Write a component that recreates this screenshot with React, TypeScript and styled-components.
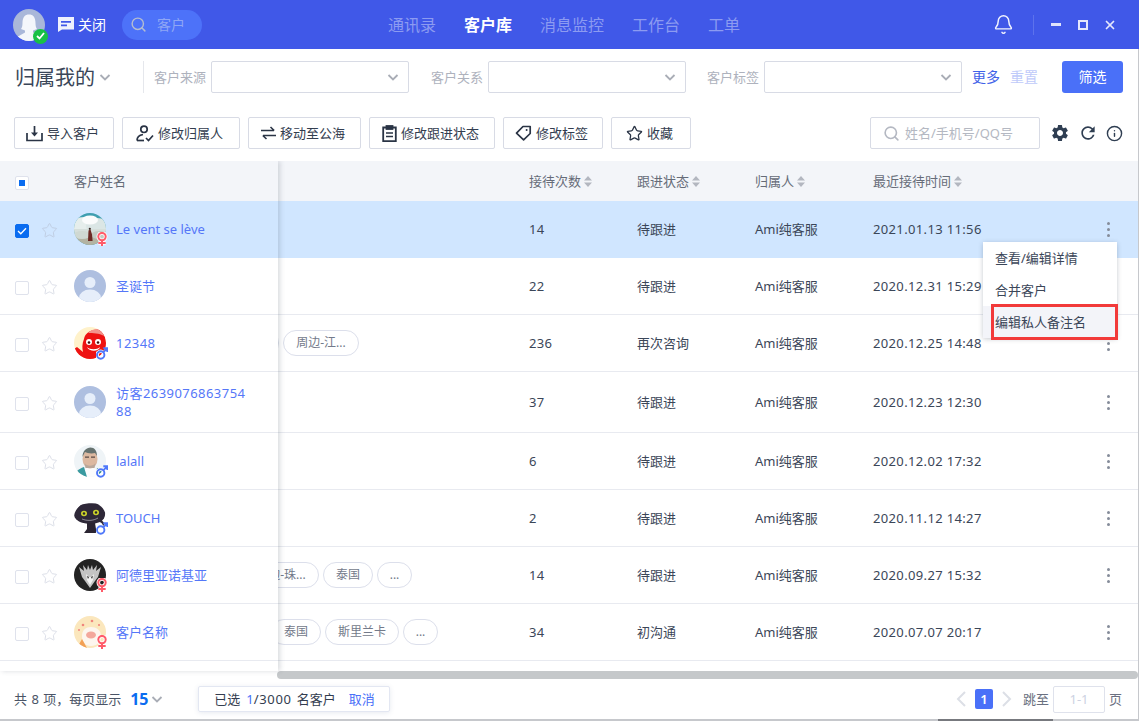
import React from 'react';
import styled, { createGlobalStyle } from 'styled-components';
import { Bell, Info, Search, Star, X } from 'lucide-react';
import { MdRefresh, MdSettings } from 'react-icons/md';

const GlobalStyle = createGlobalStyle`
  html, body {
    margin: 0;
    padding: 0;
    background: #ffffff;
  }
  * {
    box-sizing: border-box;
  }
  body {
    font-family: "Noto Sans", "Noto Sans CJK SC", "Liberation Sans", sans-serif;
    font-size: 13px;
    color: #333d4f;
  }
`;

const Root = styled.div`
  position: relative;
  width: 1139px;
  height: 721px;
  display: flex;
  flex-direction: column;
  overflow: hidden;
  background: #ffffff;
`;

const Body = styled.div`
  flex: 1;
  min-height: 0;
  display: flex;
  flex-direction: column;
  border-right: 1px solid #c6c8cc;
`;

// the CJK face sits a little low in its line box, this lifts a label back
const Label = styled.span`
  padding-bottom: 2px;
  white-space: nowrap;
`;

/* ---------- title bar ---------- */
const Header = styled.header`
  height: 49px;
  flex: none;
  display: flex;
  align-items: center;
  padding-left: 13px;
  background: #4058e8;
  color: #ffffff;
`;

const UserAvatar = styled.div`
  position: relative;
  width: 32px;
  height: 32px;
  flex: none;
  border-radius: 50%;
  overflow: visible;
  svg.face {
    display: block;
    border-radius: 50%;
  }
`;

const OnlineBadge = styled.span`
  position: absolute;
  right: -3px;
  bottom: -3px;
  width: 15px;
  height: 15px;
  border-radius: 50%;
  background: #18c145;
  display: flex;
  align-items: center;
  justify-content: center;
`;

const CloseChat = styled.div`
  display: flex;
  align-items: center;
  gap: 4px;
  margin-left: 13px;
  font-size: 14px;
  width: 64px;
`;

const SearchPill = styled.div`
  width: 80px;
  height: 30px;
  border-radius: 15px;
  background: #4d72f9;
  display: flex;
  align-items: center;
  gap: 10px;
  padding-left: 8px;
  color: #8fa7f5;
  font-size: 14px;
  svg {
    color: #b4bdd0;
  }
`;

const Nav = styled.nav`
  display: flex;
  gap: 28px;
  margin-left: 186px;
`;

const NavItem = styled.span<{ $active?: boolean }>`
  font-size: 16px;
  padding-bottom: 2px;
  font-weight: ${(p) => (p.$active ? 700 : 400)};
  color: ${(p) => (p.$active ? '#ffffff' : '#8c9bf1')};
`;

const WindowControls = styled.div`
  margin-left: auto;
  display: flex;
  align-items: center;
  padding-right: 22px;
`;

const HeaderDivider = styled.span`
  width: 1px;
  height: 20px;
  background: #5d72ec;
  margin: 0 17px 0 19px;
`;

const MinimizeGlyph = styled.span`
  width: 10px;
  height: 3px;
  background: #dfe3fb;
  margin-right: 17px;
`;

const MaximizeGlyph = styled.span`
  width: 10px;
  height: 10px;
  border: 2px solid #e4e7fc;
  margin-right: 15px;
`;

/* ---------- filters ---------- */
const FilterBar = styled.div`
  display: flex;
  align-items: center;
  height: 32px;
  margin-top: 12px;
  padding-left: 15px;
  flex: none;
`;

const ViewTitle = styled.div`
  display: flex;
  align-items: center;
  gap: 4px;
  width: 129px;
  height: 32px;
  border-right: 1px solid #e5e7ec;
  font-size: 20px;
  color: #3a4658;
  svg {
    color: #a9adb6;
  }
`;

const FilterLabel = styled.span<{ $gap: number }>`
  margin-left: ${(p) => p.$gap}px;
  margin-right: 5px;
  padding-bottom: 2px;
  font-size: 13px;
  color: #aeb2bd;
  white-space: nowrap;
`;

const SelectBox = styled.div`
  width: 198px;
  height: 32px;
  border: 1px solid #d8dbe5;
  border-radius: 2px;
  display: flex;
  align-items: center;
  justify-content: flex-end;
  padding-right: 9px;
  color: #a9adb6;
`;

const FilterLink = styled.a<{ $muted?: boolean }>`
  font-size: 14px;
  margin-left: 10px;
  padding-bottom: 2px;
  color: ${(p) => (p.$muted ? '#bfcafa' : '#3f62e8')};
  white-space: nowrap;
`;

const PrimaryButton = styled.button`
  width: 61px;
  height: 32px;
  margin-left: 24px;
  padding: 0 0 2px;
  border: 0;
  border-radius: 3px;
  background: #4a70f8;
  color: #ffffff;
  font: inherit;
  font-size: 14px;
`;

/* ---------- toolbar ---------- */
const Toolbar = styled.div`
  display: flex;
  align-items: center;
  gap: 8px;
  height: 32px;
  margin-top: 24px;
  margin-bottom: 12px;
  padding-left: 14px;
  flex: none;
`;

const ToolButton = styled.button<{ $width: number }>`
  width: ${(p) => p.$width}px;
  height: 32px;
  display: flex;
  align-items: center;
  justify-content: center;
  gap: 4px;
  padding: 0 3px 0 0;
  border: 1px solid #d8dbe5;
  border-radius: 2px;
  background: #ffffff;
  color: #333d4f;
  font: inherit;
  font-size: 13px;
`;

const ToolSearch = styled.div`
  width: 170px;
  height: 32px;
  margin-left: auto;
  display: flex;
  align-items: center;
  gap: 5px;
  padding-left: 12px;
  border: 1px solid #d8dbe5;
  border-radius: 2px;
  color: #b4b8c2;
  font-size: 13px;
`;

const ToolIcons = styled.div`
  display: flex;
  align-items: center;
  gap: 8px;
  margin-left: 2px;
  margin-right: 15px;
  color: #2f3e52;
`;

/* ---------- table ---------- */
const TableArea = styled.div`
  flex: 1;
  min-height: 0;
  display: grid;
  grid-template-columns: 278px 860px;
  overflow: hidden;
`;

const FrozenColumn = styled.div`
  position: relative;
  z-index: 2;
  height: 510px;
  background: #ffffff;
  box-shadow: 2px 0 5px rgba(60, 70, 90, 0.2);
`;

const HeadCell = styled.div`
  height: 40px;
  background: #f3f5f9;
  color: #666c78;
  font-size: 13px;
  display: flex;
  align-items: center;
`;

const FrozenHead = styled(HeadCell)`
  padding-left: 15px;
  gap: 45px;
`;

const ColumnsHead = styled(HeadCell)`
  display: grid;
  grid-template-columns: 251px 108px 118px 118px 1fr;
`;

const ColumnTitle = styled.span`
  display: flex;
  align-items: center;
  gap: 3px;
`;

const FrozenRow = styled.div<{ $height: number; $selected?: boolean }>`
  height: ${(p) => p.$height}px;
  display: flex;
  align-items: center;
  padding-left: 15px;
  background: ${(p) => (p.$selected ? '#d0e6ff' : '#ffffff')};
  border-bottom: 1px solid ${(p) => (p.$selected ? '#d0e6ff' : '#e8eaf0')};
`;

const DataRow = styled.div<{ $height: number; $selected?: boolean }>`
  height: ${(p) => p.$height}px;
  display: grid;
  grid-template-columns: 251px 108px 118px 118px 1fr 60px;
  align-items: center;
  background: ${(p) => (p.$selected ? '#d0e6ff' : '#ffffff')};
  border-bottom: 1px solid ${(p) => (p.$selected ? '#d0e6ff' : '#e8eaf0')};
  font-size: 13px;
  color: #3b4658;
`;

const Checkbox = styled.span<{ $state?: 'checked' | 'partial' }>`
  width: 14px;
  height: 14px;
  flex: none;
  margin-top: 4px;
  border-radius: 2px;
  border: 1px solid ${(p) => (p.$state === 'checked' ? '#0a6cf0' : '#dfe2ec')};
  background: ${(p) => (p.$state === 'checked' ? '#0a6cf0' : '#ffffff')};
  display: flex;
  align-items: center;
  justify-content: center;
  &::after {
    content: '';
    display: ${(p) => (p.$state === 'partial' ? 'block' : 'none')};
    width: 6px;
    height: 6px;
    background: #0a6cf0;
  }
`;

const RowStar = styled.span<{ $selected?: boolean }>`
  width: 17px;
  margin: 2px 16px 0 12px;
  display: flex;
  color: ${(p) => (p.$selected ? '#bfcde3' : '#dcdfe8')};
`;

const AvatarWrap = styled.div`
  position: relative;
  width: 32px;
  height: 32px;
  flex: none;
  svg.face {
    display: block;
    border-radius: 50%;
  }
`;

const GenderMark = styled.span`
  position: absolute;
  right: -2px;
  bottom: -1px;
  width: 12px;
  height: 14px;
  display: flex;
`;

const CustomerName = styled.a<{ $digits?: boolean }>`
  width: 134px;
  margin-left: 10px;
  font-size: 13px;
  line-height: 18px;
  letter-spacing: ${(p) => (p.$digits ? '0.45px' : '0')};
  color: #5577f8;
  word-break: break-all;
`;

const TagList = styled.div<{ $shift: number }>`
  display: flex;
  gap: 4px;
  margin-left: ${(p) => p.$shift + 5}px;
`;

const Tag = styled.span<{ $width: number }>`
  width: ${(p) => p.$width}px;
  height: 26px;
  flex: none;
  display: flex;
  align-items: center;
  justify-content: center;
  padding-bottom: 2px;
  border: 1px solid #dcdfeb;
  border-radius: 13px;
  background: #ffffff;
  color: #737a8a;
  font-size: 12px;
  white-space: nowrap;
`;

const VisitCount = styled.span`
  letter-spacing: 0.3px;
`;

const DateCell = styled.span`
  letter-spacing: 0.35px;
  white-space: nowrap;
`;

const RowMenu = styled.div`
  justify-self: center;
  display: flex;
  flex-direction: column;
  gap: 3px;
  i {
    width: 3px;
    height: 3px;
    border-radius: 50%;
    background: #858c9a;
    display: block;
  }
`;

const ScrollTrack = styled.div`
  height: 8px;
  margin-top: auto;
  margin-left: -1px;
  border-radius: 4px;
  background: #c5c8ca;
`;

const ScrollStack = styled.div`
  min-width: 0;
  height: 518px;
  display: flex;
  flex-direction: column;
`;

const ContextMenu = styled.ul`
  position: absolute;
  left: 983px;
  top: 242px;
  z-index: 5;
  width: 134px;
  margin: 0;
  padding: 0;
  list-style: none;
  background: #ffffff;
  border-radius: 2px;
  box-shadow: 0 1px 5px rgba(50, 60, 80, 0.28);
`;

const ContextItem = styled.li<{ $outlined?: boolean }>`
  position: relative;
  height: 32px;
  padding: 0 0 2px 12px;
  display: flex;
  align-items: center;
  color: #3b4658;
  font-size: 13px;
  white-space: nowrap;
  background: ${(p) => (p.$outlined ? '#f3f4f9' : '#ffffff')};
  &::after {
    content: '';
    display: ${(p) => (p.$outlined ? 'block' : 'none')};
    position: absolute;
    left: 8px;
    right: -1px;
    top: -2px;
    bottom: -2px;
    border: 3px solid #f23a3a;
  }
`;

/* ---------- footer ---------- */
const Footer = styled.footer`
  height: 40px;
  flex: none;
  display: flex;
  align-items: center;
  padding-left: 14px;
  background: #ffffff;
  position: relative;
  z-index: 3;
`;

const TotalText = styled(Label)`
  font-size: 13px;
  word-spacing: 1px;
  color: #4a5466;
`;

const PageSize = styled.span`
  display: flex;
  align-items: center;
  gap: 2px;
  margin-left: 9px;
  width: 68px;
  color: #0a6cf0;
  font-size: 16px;
  font-weight: 700;
  svg {
    color: #a9adb6;
  }
`;

const SelectionBar = styled.div`
  width: 192px;
  height: 26px;
  display: flex;
  align-items: center;
  padding-left: 15px;
  border: 1px solid #e3e7f2;
  border-radius: 2px;
  box-shadow: 0 1px 5px rgba(70, 90, 140, 0.13);
  font-size: 13px;
  color: #333d4f;
  white-space: nowrap;
`;

const PickedCount = styled.span`
  margin-left: 6px;
  color: #4a70f8;
`;

const LimitCount = styled.span`
  margin-right: 5px;
  letter-spacing: 0.7px;
`;

const CancelLink = styled(Label)`
  margin-left: 13px;
  color: #4a70f8;
`;

const Pagination = styled.div`
  margin-left: auto;
  display: flex;
  align-items: center;
  padding-right: 16px;
  color: #6a7080;
  font-size: 13px;
  svg {
    color: #dcdfe6;
  }
`;

const PageNumber = styled.span`
  width: 18px;
  height: 20px;
  margin: 0 9px;
  border-radius: 2px;
  background: #4a70f8;
  color: #ffffff;
  font-weight: 600;
  display: flex;
  align-items: center;
  justify-content: center;
`;

const JumpLabel = styled(Label)`
  margin-left: 11px;
`;

const JumpInput = styled.span`
  width: 52px;
  height: 27px;
  margin: 0 4px;
  border: 1px solid #dfe2ec;
  border-radius: 2px;
  color: #ccd2e2;
  display: flex;
  align-items: center;
  justify-content: center;
`;

const WindowEdge = styled.div`
  height: 2px;
  flex: none;
  background: linear-gradient(
    to right,
    #c6c8cc 938px,
    #77797e 938px,
    #77797e 1053px,
    #c6c8cc 1053px
  );
`;

/* ---------- drawings ---------- */
const Chevron = ({ size = 12 }: { size?: number }) => (
  <svg width={size} height={size} viewBox="0 0 12 12" fill="none">
    <path d="M1.5 4l4.5 4.5L10.5 4" stroke="currentColor" strokeWidth="1.8" />
  </svg>
);

const SortMark = () => (
  <svg width="8" height="11" viewBox="0 0 8 11" fill="#b3b7c0">
    <path d="M4 0l4 4.5H0zM4 11L0 6.5h8z" />
  </svg>
);

const ImportIcon = () => (
  <svg width="17" height="17" viewBox="0 0 17 17" fill="none" stroke="#2a3445" strokeWidth="1.7">
    <path d="M1 8v7.500h15V8" />
    <path d="M8.500 1v9" />
    <path d="M5 7.500h7l-3.500 4z" fill="#2a3445" stroke="none" />
  </svg>
);

const OwnerIcon = () => (
  <svg width="18" height="17" viewBox="0 0 18 17" fill="none" stroke="#2a3445" strokeWidth="1.7">
    <circle cx="8" cy="4.300" r="3.200" />
    <path d="M1 15.500c0-3.500 3-5.500 6-6" />
    <path d="M1 15.500h7" />
    <path d="M10 13l2.500 2.500L17 10.500" />
  </svg>
);

const SwapIcon = () => (
  <svg width="15" height="14" viewBox="0 0 15 14" fill="none" stroke="#2a3445" strokeWidth="1.600">
    <path d="M0 4.500h13M9.500 1l3.700 3.500" />
    <path d="M15 9.500H2M5.500 13L1.800 9.500" />
  </svg>
);

const ClipboardIcon = () => (
  <svg width="15" height="17" viewBox="0 0 15 17" fill="none" stroke="#2a3445" strokeWidth="1.800">
    <path d="M4 2.500H1.200v13.600h12.600V2.500H11" />
    <rect x="4.500" y="1" width="6" height="3" fill="#2a3445" />
    <path d="M4 8h7M4 11.500h7" strokeWidth="1.500" />
  </svg>
);

const TagIcon = () => (
  <svg width="17" height="16" viewBox="0 0 17 16" fill="none" stroke="#2a3445" strokeWidth="1.700">
    <path d="M1.500 8.200L8 1.500h7.200v7L8.600 14.800z" strokeLinejoin="round" />
    <circle cx="11.600" cy="5" r="1" fill="#2a3445" stroke="none" />
  </svg>
);

const CloseChatIcon = () => (
  <svg width="16" height="15" viewBox="0 0 16 15">
    <path d="M0 0h16v12.500H4L0 15z" fill="#eef1fd" />
    <path d="M3 4h10v1.800H3zM3 7.500h6v1.800H3z" fill="#4058e8" />
  </svg>
);

const PersonFace = () => (
  <svg className="face" width="32" height="32" viewBox="0 0 32 32">
    <rect width="32" height="32" fill="#aebfe0" />
    <circle cx="16" cy="12.500" r="5.500" fill="#e6eefa" />
    <ellipse cx="16" cy="28" rx="11" ry="8.500" fill="#e6eefa" />
  </svg>
);

const WomanFace = () => (
  <svg className="face" width="32" height="32" viewBox="0 0 32 32">
    <rect width="32" height="32" fill="#a9b7d9" />
    <path d="M9.500 14c0-6 2.600-8.500 6.500-8.500s6.500 2.500 6.500 8.500c0 3 .6 5 1.500 6l-4 1.500v2l7 4V32H5v-4.500l7-4v-2L8 20c.9-1 1.500-3 1.500-6z" fill="#f4f6fb" />
  </svg>
);

const CloudFace = () => (
  <svg className="face" width="32" height="32" viewBox="0 0 32 32">
    <rect width="32" height="32" fill="#3f9fb0" />
    <ellipse cx="10" cy="12" rx="12" ry="8" fill="#e6eeec" />
    <ellipse cx="23" cy="13" rx="11" ry="8" fill="#dbe6e5" />
    <ellipse cx="16" cy="7" rx="8" ry="4.500" fill="#fbfcfc" />
    <rect y="16" width="32" height="8" fill="#d6dfdb" />
    <rect y="23" width="32" height="9" fill="#b3b3a2" />
    <ellipse cx="8" cy="22" rx="9" ry="4" fill="#cfd8d2" />
    <ellipse cx="25" cy="22" rx="8" ry="4" fill="#c3cbc2" />
    <path d="M14.500 17.500l2-1 1.500 5 .6 6.500h-4.600z" fill="#6d2a24" />
    <circle cx="15.800" cy="15.800" r="1.100" fill="#3a2a26" />
  </svg>
);

const MascotFace = () => (
  <svg className="face" width="32" height="32" viewBox="0 0 32 32">
    <rect width="32" height="32" fill="#fff2cb" />
    <path d="M10 12c1-7 10-11 17-9 3 3 5 8 5 13v16H9l-3-2-6-8 3-2 6 5c-1-4-1-8 1-13z" fill="#ee1212" />
    <path d="M14 6c3-4 10-5 14-2l2 5c-5-3-11-3-16-3z" fill="#f2938d" />
    <circle cx="15" cy="15" r="3" fill="#ffffff" />
    <circle cx="24" cy="15" r="3" fill="#ffffff" />
    <circle cx="15" cy="15.500" r="1.300" fill="#3a1010" />
    <circle cx="24" cy="15.500" r="1.300" fill="#3a1010" />
    <path d="M13 20c3 3 10 3 13 0-1 5-11 5-13 0z" fill="#ffffff" />
  </svg>
);

const ManFace = () => (
  <svg className="face" width="32" height="32" viewBox="0 0 32 32">
    <rect width="32" height="32" fill="#eff4f7" />
    <path d="M4 32c1-6 4-8 8-9h8c4 1 7 3 8 9z" fill="#fbfcfd" />
    <path d="M3 26c2-2 4-3 7-4l3 10H7z" fill="#3a9aa0" />
    <path d="M3 26l5 6H4z" fill="#eba04f" />
    <path d="M23 23c2 .5 4 2 5 4l-3 5h-3z" fill="#3a8f9a" />
    <ellipse cx="16" cy="14" rx="7.500" ry="9.500" fill="#dcb8a0" />
    <path d="M8.500 12c0-6 4-9.500 8-9.500s6.500 3 6.500 8.500l-2-3c-4 1-8 0-10-1z" fill="#66726f" />
    <path d="M10.500 18c2 3.500 9 3.500 11 0l-1 5h-9z" fill="#b9a79a" />
    <path d="M11 11.500h4v1.300h-4zM17 11.500h4v1.300h-4z" fill="#5a4a44" />
  </svg>
);

const CatFace = () => (
  <svg className="face" width="32" height="32" viewBox="0 0 32 32">
    <rect width="32" height="32" fill="#ffffff" />
    <path d="M0 10L6 3c6-2 14-2 21-1l4 6c1 6-1 10-5 12-7 3-15 2-20 0C2 18-1 15 0 10z" fill="#2e2838" />
    <ellipse cx="10" cy="11.500" rx="3" ry="2.800" fill="#c9d02a" />
    <ellipse cx="22" cy="10.500" rx="3" ry="2.800" fill="#c9d02a" />
    <circle cx="10" cy="11.500" r="1.200" fill="#26232e" />
    <circle cx="22" cy="10.500" r="1.200" fill="#26232e" />
    <path d="M8 17c5 2 11 2 16-1" stroke="#8d8a94" strokeWidth="1" fill="none" />
    <path d="M13 21h8l1 6 3 4H10l3-4z" fill="#2a2431" />
    <path d="M26 19c3 1 4 3 4 6" stroke="#2e2838" strokeWidth="2" fill="none" />
  </svg>
);

const EmblemFace = () => (
  <svg className="face" width="32" height="32" viewBox="0 0 32 32">
    <rect width="32" height="32" fill="#232323" />
    <path d="M16 29l-5-7-3-4-3-10 5 4-1-6 4 5 1-5 2 5 2-5 1 5 4-5-1 6 5-4-3 10-3 4z" fill="#c4c4c4" />
    <path d="M12 15l3 3h2l3-3-1 6-3 5-3-5z" fill="#f2f2f2" />
    <path d="M13 17l2 1-1 2zM19 17l-2 1 1 2z" fill="#232323" />
  </svg>
);

const PigFace = () => (
  <svg className="face" width="32" height="32" viewBox="0 0 32 32">
    <rect width="32" height="32" fill="#fbe7bd" />
    <path d="M8 20c0-6 4-9 9-9s10 3 10 9-4 10-10 10S8 26 8 20z" fill="#fdf6ee" />
    <ellipse cx="17" cy="19" rx="5" ry="3.500" fill="#f3a89c" />
    <path d="M3 32l5-9 5 9z" fill="#f2a055" />
    <circle cx="9" cy="9" r="1.300" fill="#f0857c" />
    <circle cx="18" cy="5" r="1.300" fill="#f0857c" />
    <circle cx="25" cy="9" r="1.100" fill="#f0857c" />
    <circle cx="5" cy="14" r="1" fill="#f0857c" />
  </svg>
);

const FemaleMark = () => (
  <svg width="12" height="14" viewBox="0 0 12 14" fill="none" stroke="#ff5c6a" strokeWidth="2">
    <circle cx="6" cy="4.600" r="3.700" stroke="#ffffff" strokeWidth="3.600" />
    <path d="M6 8v5.500M2.300 11h7.400" stroke="#ffffff" strokeWidth="3.600" />
    <circle cx="6" cy="4.600" r="3.700" />
    <path d="M6 8v6M2.300 11h7.400" />
  </svg>
);

const MaleMark = () => (
  <svg width="12" height="14" viewBox="0 0 12 14" fill="none" stroke="#4f78fa" strokeWidth="1.900">
    <circle cx="4.700" cy="9" r="3.700" stroke="#ffffff" strokeWidth="3.500" />
    <circle cx="4.700" cy="9" r="3.700" />
    <path d="M7.500 6.200L11 2.700M7.300 2.200H11.300V6" />
  </svg>
);

const RowCheck = () => (
  <svg width="10" height="8" viewBox="0 0 10 8" fill="none" stroke="#ffffff" strokeWidth="1.300">
    <path d="M1 4l2.800 2.800L9 1.300" />
  </svg>
);

/* ---------- data ---------- */
interface Customer {
  name: string;
  face: React.ReactNode;
  gender?: 'female' | 'male';
  visits: number;
  status: string;
  time: string;
  height: number;
  tags?: { label: string; width: number }[];
  tagShift?: number;
  selected?: boolean;
}

const customers: Customer[] = [
  { name: 'Le vent se lève', face: <CloudFace />, gender: 'female', visits: 14, status: '待跟进', time: '2021.01.13 11:56', height: 57, selected: true },
  { name: '圣诞节', face: <PersonFace />, visits: 22, status: '待跟进', time: '2020.12.31 15:29', height: 57 },
  {
    name: '12348', face: <MascotFace />, gender: 'male', visits: 236, status: '再次咨询', time: '2020.12.25 14:48', height: 57,
    tags: [{ label: '周边-珠...', width: 76 }, { label: '周边-江...', width: 76 }], tagShift: -80,
  },
  { name: '访客263907686375488', face: <PersonFace />, visits: 37, status: '待跟进', time: '2020.12.23 12:30', height: 61 },
  { name: 'lalall', face: <ManFace />, gender: 'male', visits: 6, status: '待跟进', time: '2020.12.02 17:32', height: 57 },
  { name: 'TOUCH', face: <CatFace />, gender: 'male', visits: 2, status: '待跟进', time: '2020.11.12 14:27', height: 57 },
  {
    name: '阿德里亚诺基亚', face: <EmblemFace />, gender: 'female', visits: 14, status: '待跟进', time: '2020.09.27 15:32', height: 57,
    tags: [{ label: '周边-珠...', width: 76 }, { label: '泰国', width: 50 }, { label: '...', width: 35 }], tagShift: -40,
  },
  {
    name: '客户名称', face: <PigFace />, gender: 'female', visits: 34, status: '初沟通', time: '2020.07.07 20:17', height: 57,
    tags: [{ label: '泰国', width: 50 }, { label: '斯里兰卡', width: 74 }, { label: '...', width: 35 }], tagShift: -12,
  },
];

const toolActions = [
  { label: '导入客户', width: 100, icon: <ImportIcon /> },
  { label: '修改归属人', width: 118, icon: <OwnerIcon /> },
  { label: '移动至公海', width: 113, icon: <SwapIcon /> },
  { label: '修改跟进状态', width: 126, icon: <ClipboardIcon /> },
  { label: '修改标签', width: 100, icon: <TagIcon /> },
  { label: '收藏', width: 80, icon: <Star size={17} strokeWidth={1.8} color="#2a3445" /> },
];

const navItems = ['通讯录', '客户库', '消息监控', '工作台', '工单'];
const filters = [
  { label: '客户来源', gap: 10 },
  { label: '客户关系', gap: 22 },
  { label: '客户标签', gap: 21 },
];

export default function App() {
  return (
    <Root>
      <GlobalStyle />
      <Header>
        <UserAvatar>
          <WomanFace />
          <OnlineBadge>
            <svg width="9" height="8" viewBox="0 0 9 8" fill="none" stroke="#ffffff" strokeWidth="1.800">
              <path d="M1 4l2.500 2.500L8 1" />
            </svg>
          </OnlineBadge>
        </UserAvatar>
        <CloseChat>
          <CloseChatIcon />
          <Label>关闭</Label>
        </CloseChat>
        <SearchPill>
          <Search size={17} strokeWidth={2} />
          <Label>客户</Label>
        </SearchPill>
        <Nav>
          {navItems.map((item) => (
            <NavItem key={item} $active={item === '客户库'}>
              {item}
            </NavItem>
          ))}
        </Nav>
        <WindowControls>
          <Bell size={21} strokeWidth={1.7} color="#f2f4fe" />
          <HeaderDivider />
          <MinimizeGlyph />
          <MaximizeGlyph />
          <X size={14} strokeWidth={3} color="#e4e7fc" />
        </WindowControls>
      </Header>

      <Body>
        <FilterBar>
          <ViewTitle>
            <Label>归属我的</Label>
            <Chevron />
          </ViewTitle>
          {filters.map((f) => (
            <React.Fragment key={f.label}>
              <FilterLabel $gap={f.gap}>{f.label}</FilterLabel>
              <SelectBox>
                <Chevron />
              </SelectBox>
            </React.Fragment>
          ))}
          <FilterLink>更多</FilterLink>
          <FilterLink $muted>重置</FilterLink>
          <PrimaryButton>筛选</PrimaryButton>
        </FilterBar>

        <Toolbar>
          {toolActions.map((action) => (
            <ToolButton key={action.label} $width={action.width}>
              {action.icon}
              <Label>{action.label}</Label>
            </ToolButton>
          ))}
          <ToolSearch>
            <Search size={17} strokeWidth={2.3} color="#b4b8c2" />
            <Label>姓名/手机号/QQ号</Label>
          </ToolSearch>
          <ToolIcons>
            <MdSettings size={20} />
            <MdRefresh size={20} />
            <Info size={17} strokeWidth={2} />
          </ToolIcons>
        </Toolbar>

        <TableArea>
          <FrozenColumn>
            <FrozenHead>
              <Checkbox $state="partial" />
              <Label>客户姓名</Label>
            </FrozenHead>
            {customers.map((c) => (
              <FrozenRow key={c.name} $height={c.height} $selected={c.selected}>
                <Checkbox $state={c.selected ? 'checked' : undefined}>{c.selected && <RowCheck />}</Checkbox>
                <RowStar $selected={c.selected}>
                  <Star size={17} strokeWidth={1.4} />
                </RowStar>
                <AvatarWrap>
                  {c.face}
                  {c.gender && <GenderMark>{c.gender === 'female' ? <FemaleMark /> : <MaleMark />}</GenderMark>}
                </AvatarWrap>
                <CustomerName $digits={/\d/.test(c.name)}>{c.name}</CustomerName>
              </FrozenRow>
            ))}
          </FrozenColumn>

          <ScrollStack>
            <ColumnsHead>
              <span />
              {['接待次数', '跟进状态', '归属人', '最近接待时间'].map((title) => (
                <ColumnTitle key={title}>
                  <Label>{title}</Label>
                  <SortMark />
                </ColumnTitle>
              ))}
            </ColumnsHead>
            {customers.map((c) => (
              <DataRow key={c.name} $height={c.height} $selected={c.selected}>
                <TagList $shift={c.tagShift ?? 0}>
                  {c.tags?.map((t) => (
                    <Tag key={t.label} $width={t.width}>
                      {t.label}
                    </Tag>
                  ))}
                </TagList>
                <VisitCount>{c.visits}</VisitCount>
                <Label>{c.status}</Label>
                <Label>Ami纯客服</Label>
                <DateCell>{c.time}</DateCell>
                <RowMenu>
                  <i />
                  <i />
                  <i />
                </RowMenu>
              </DataRow>
            ))}
            <ScrollTrack />
          </ScrollStack>
        </TableArea>

        <Footer>
          <TotalText>共 8 项，每页显示</TotalText>
          <PageSize>
            15
            <Chevron />
          </PageSize>
          <SelectionBar>
            <Label>已选</Label>
            <PickedCount>1</PickedCount>
            <LimitCount>/3000</LimitCount>
            <Label>名客户</Label>
            <CancelLink>取消</CancelLink>
          </SelectionBar>
          <Pagination>
            <svg width="10" height="16" viewBox="0 0 10 16" fill="none" stroke="currentColor" strokeWidth="2">
              <path d="M9 1L2 8l7 7" />
            </svg>
            <PageNumber>1</PageNumber>
            <svg width="10" height="16" viewBox="0 0 10 16" fill="none" stroke="currentColor" strokeWidth="2">
              <path d="M1 1l7 7-7 7" />
            </svg>
            <JumpLabel>跳至</JumpLabel>
            <JumpInput>1-1</JumpInput>
            <Label>页</Label>
          </Pagination>
        </Footer>
      </Body>
      <WindowEdge />

      <ContextMenu>
        <ContextItem>查看/编辑详情</ContextItem>
        <ContextItem>合并客户</ContextItem>
        <ContextItem $outlined>编辑私人备注名</ContextItem>
      </ContextMenu>
    </Root>
  );
}
